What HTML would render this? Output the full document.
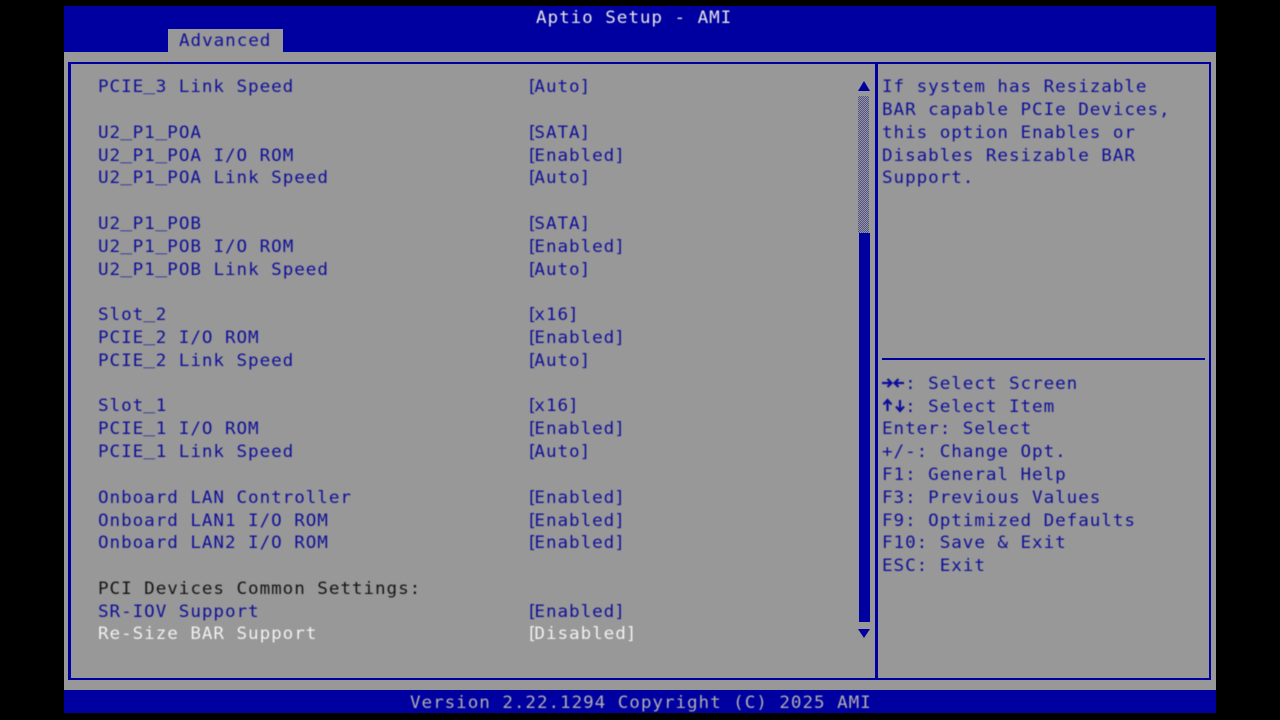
<!DOCTYPE html>
<html><head><meta charset="utf-8"><title>Aptio Setup</title>
<style>
html,body{margin:0;padding:0;background:#000;width:1280px;height:720px;overflow:hidden}
#s{position:absolute;left:64px;top:6px;width:1152px;height:707px;background:#989898}
.b{position:absolute;background:#0000a0}
.w{position:absolute;left:0;top:1px;width:1280px;height:719px;filter:blur(.4px)}
.t{position:absolute;font:17.6px/23px "DejaVu Sans Mono","Liberation Mono",monospace;letter-spacing:.95px;white-space:pre;color:#10109a;transform:scaleY(.95)}
.k{color:#151515}.h{color:#f0f0f0}.f{color:#aeaeae}.l{color:#e6e6e6}
.v{left:526.500px}
.o{letter-spacing:-2.700px}
.c{margin-left:-1px}
em{font-style:normal;display:inline-block;position:relative;top:-2px;transform:scaleX(1.12)}
</style></head><body>
<div id="s"></div>
<div class="b" style="left:64px;top:6px;width:1152px;height:46px"></div>
<div class="b" style="left:64px;top:690px;width:1152px;height:23px"></div>
<div style="position:absolute;left:168px;top:29px;width:115px;height:23px;background:#989898"></div>
<div class="b" style="left:68px;top:62px;width:1143px;height:2px"></div>
<div class="b" style="left:68px;top:678px;width:1143px;height:2px"></div>
<div class="b" style="left:68px;top:62px;width:3px;height:618px"></div>
<div class="b" style="left:1209px;top:62px;width:2px;height:618px"></div>
<div class="b" style="left:875px;top:62px;width:3px;height:618px"></div>
<div class="b" style="left:882px;top:358px;width:323px;height:2px"></div>
<div class="b" style="left:859px;top:233px;width:11px;height:389px"></div>
<div style="position:absolute;left:858px;top:96px;width:11px;height:137px;background:repeating-conic-gradient(#50508e 0 25%,#989898 0 50%) 0 0/2px 2px"></div>
<svg style="position:absolute;left:0;top:0" width="1280" height="720"><path d="M864 81L870 91H858Z M858 629H870L864 638Z" fill="#0000a0"/></svg>
<div class="w">
<div class="t l" style="left:536px;top:6px">Aptio Setup - AMI</div>
<div class="t" style="left:179px;top:29px">Advanced</div>
<div class="t f" style="left:410px;top:691px">Version 2.22.1294 Copyright (C) 2025 AMI</div>

<div class="t" style="left:98px;top:75px">PCIE<em>_</em>3 Link Speed</div><div class="t v" style="top:75px"><span class="o">[</span>Auto<span class="c">]</span></div>
<div class="t" style="left:98px;top:121px">U2<em>_</em>P1<em>_</em>POA</div><div class="t v" style="top:121px"><span class="o">[</span>SATA<span class="c">]</span></div>
<div class="t" style="left:98px;top:144px">U2<em>_</em>P1<em>_</em>POA I/O ROM</div><div class="t v" style="top:144px"><span class="o">[</span>Enabled<span class="c">]</span></div>
<div class="t" style="left:98px;top:166px">U2<em>_</em>P1<em>_</em>POA Link Speed</div><div class="t v" style="top:166px"><span class="o">[</span>Auto<span class="c">]</span></div>
<div class="t" style="left:98px;top:212px">U2<em>_</em>P1<em>_</em>POB</div><div class="t v" style="top:212px"><span class="o">[</span>SATA<span class="c">]</span></div>
<div class="t" style="left:98px;top:235px">U2<em>_</em>P1<em>_</em>POB I/O ROM</div><div class="t v" style="top:235px"><span class="o">[</span>Enabled<span class="c">]</span></div>
<div class="t" style="left:98px;top:257.500px">U2<em>_</em>P1<em>_</em>POB Link Speed</div><div class="t v" style="top:257.500px"><span class="o">[</span>Auto<span class="c">]</span></div>
<div class="t" style="left:98px;top:303px">Slot<em>_</em>2</div><div class="t v" style="top:303px"><span class="o">[</span>x16<span class="c">]</span></div>
<div class="t" style="left:98px;top:326px">PCIE<em>_</em>2 I/O ROM</div><div class="t v" style="top:326px"><span class="o">[</span>Enabled<span class="c">]</span></div>
<div class="t" style="left:98px;top:349px">PCIE<em>_</em>2 Link Speed</div><div class="t v" style="top:349px"><span class="o">[</span>Auto<span class="c">]</span></div>
<div class="t" style="left:98px;top:394px">Slot<em>_</em>1</div><div class="t v" style="top:394px"><span class="o">[</span>x16<span class="c">]</span></div>
<div class="t" style="left:98px;top:417px">PCIE<em>_</em>1 I/O ROM</div><div class="t v" style="top:417px"><span class="o">[</span>Enabled<span class="c">]</span></div>
<div class="t" style="left:98px;top:440px">PCIE<em>_</em>1 Link Speed</div><div class="t v" style="top:440px"><span class="o">[</span>Auto<span class="c">]</span></div>
<div class="t" style="left:98px;top:486px">Onboard LAN Controller</div><div class="t v" style="top:486px"><span class="o">[</span>Enabled<span class="c">]</span></div>
<div class="t" style="left:98px;top:509px">Onboard LAN1 I/O ROM</div><div class="t v" style="top:509px"><span class="o">[</span>Enabled<span class="c">]</span></div>
<div class="t" style="left:98px;top:531px">Onboard LAN2 I/O ROM</div><div class="t v" style="top:531px"><span class="o">[</span>Enabled<span class="c">]</span></div>
<div class="t k" style="left:98px;top:577px">PCI Devices Common Settings:</div>
<div class="t" style="left:98px;top:600px">SR-IOV Support</div><div class="t v" style="top:600px"><span class="o">[</span>Enabled<span class="c">]</span></div>
<div class="t h" style="left:98px;top:622px">Re-Size BAR Support</div><div class="t h v" style="top:622px"><span class="o">[</span>Disabled<span class="c">]</span></div>

<div class="t" style="left:882px;top:75px">If system has Resizable</div>
<div class="t" style="left:882px;top:98px">BAR capable PCIe Devices,</div>
<div class="t" style="left:882px;top:121px">this option Enables or</div>
<div class="t" style="left:882px;top:144px">Disables Resizable BAR</div>
<div class="t" style="left:882px;top:166px">Support.</div>

<svg style="position:absolute;left:0;top:-1px" width="1280" height="720" fill="none" stroke="#0c0c9c" stroke-width="2.200"><path d="M882 383H891M887.500 379L891.500 383L887.500 387M904 383H895M898.500 379L894.500 383L898.500 387M887.500 411V401M883.500 404.500L887.500 400L891.500 404.500M900 400V410M896 406.500L900 411L904 406.500"/></svg>
<div class="t" style="left:882px;top:371.500px">  : Select Screen</div>
<div class="t" style="left:882px;top:394.500px">  : Select Item</div>
<div class="t" style="left:882px;top:417px">Enter: Select</div>
<div class="t" style="left:882px;top:440px">+/-: Change Opt.</div>
<div class="t" style="left:882px;top:463px">F1: General Help</div>
<div class="t" style="left:882px;top:486px">F3: Previous Values</div>
<div class="t" style="left:882px;top:509px">F9: Optimized Defaults</div>
<div class="t" style="left:882px;top:531px">F10: Save &amp; Exit</div>
<div class="t" style="left:882px;top:554px">ESC: Exit</div>
</div>
</body></html>
